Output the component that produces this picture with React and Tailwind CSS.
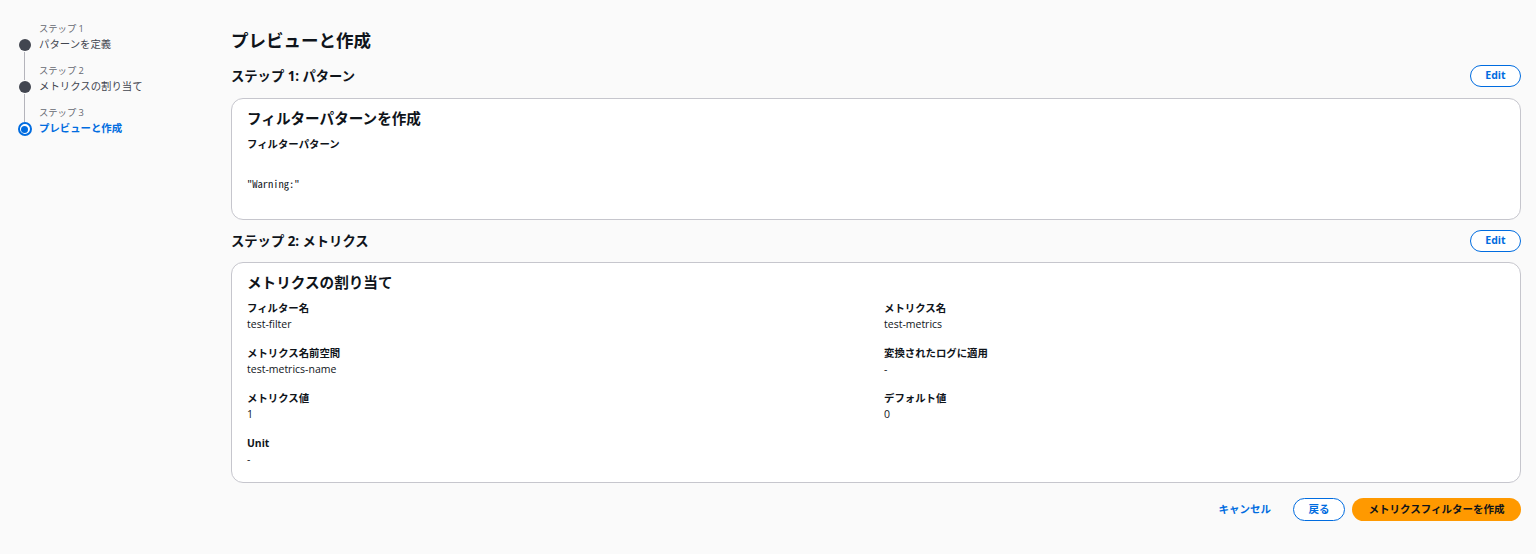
import React from 'react';

const font = { fontFamily: '"Open Sans", "Noto Sans CJK JP", sans-serif' };

const steps = [
  { label: 'ステップ 1', title: 'パターンを定義', state: 'done' },
  { label: 'ステップ 2', title: 'メトリクスの割り当て', state: 'done' },
  { label: 'ステップ 3', title: 'プレビューと作成', state: 'active' },
];

const StepNav = () => (
  <nav className="w-[231px] shrink-0 pl-[18px] pt-[22px]">
    {steps.map((s, i) => (
      <div key={s.label} className="flex">
        <div className="flex w-[13px] shrink-0 flex-col items-center">
          <div className={i > 0 ? 'h-[16px] w-px bg-[#b4b4bb]' : 'h-[16px]'} />
          {s.state === 'active' ? (
            <div className="flex h-[14px] w-[14px] items-center justify-center rounded-full border-2 border-[#006ce0] bg-white">
              <div className="h-[7px] w-[7px] rounded-full bg-[#006ce0]" />
            </div>
          ) : (
            <div className="my-[1px] h-[12px] w-[12px] rounded-full bg-[#424650]" />
          )}
          {i < steps.length - 1 && <div className="w-px flex-1 bg-[#b4b4bb]" />}
        </div>
        <div className={i < steps.length - 1 ? 'ml-[8px] pb-[12px]' : 'ml-[8px]'}>
          <div className="text-[9.3px] leading-[14px] text-[#656871]">{s.label}</div>
          <div
            className={
              s.state === 'active'
                ? 'text-[10.4px] font-bold leading-[16px] text-[#006ce0]'
                : 'text-[10.4px] leading-[16px] text-[#424650]'
            }
          >
            {s.title}
          </div>
        </div>
      </div>
    ))}
  </nav>
);

const EditButton = () => (
  <button className="h-[22px] w-[51px] rounded-full border border-[#006ce0] bg-white text-[10.5px] font-bold text-[#006ce0]">
    Edit
  </button>
);

const SectionHeader = ({ title }) => (
  <div className="flex items-center justify-between">
    <h2 className="text-[13.3px] font-bold leading-[20px] text-[#0f141a]">{title}</h2>
    <EditButton />
  </div>
);

const Field = ({ label, value }) => (
  <div className="h-[45px]">
    <div className="text-[10.4px] font-bold leading-[16px] text-[#0f141a]">{label}</div>
    <div className="text-[10.5px] leading-[16px] text-[#0f141a]">{value}</div>
  </div>
);

export default function App() {
  return (
    <div className="flex min-h-[554px] bg-[#fafafa]" style={font}>
      <StepNav />
      <main className="flex-1 pr-[15px] pt-[27px]">
        <h1 className="text-[17.5px] font-bold leading-[26px] text-[#0f141a]">プレビューと作成</h1>

        <div className="mt-[12px]">
          <SectionHeader title="ステップ 1: パターン" />
        </div>
        <section className="mt-[11px] h-[122px] rounded-[12px] border border-[#c6c6cd] bg-white px-[15px] pt-[8px]">
          <h3 className="text-[14.6px] font-bold leading-[22px] text-[#0f141a]">フィルターパターンを作成</h3>
          <div className="mt-[7px] text-[10.4px] font-bold leading-[16px] text-[#0f141a]">フィルターパターン</div>
          <pre
            className="mt-[25px] text-[10.5px] leading-[14px] text-[#0f141a]"
            style={{ fontFamily: '"Noto Sans Mono CJK JP", "DejaVu Sans Mono", monospace' }}
          >
            "Warning:"
          </pre>
        </section>

        <div className="mt-[10px]">
          <SectionHeader title="ステップ 2: メトリクス" />
        </div>
        <section className="mt-[10px] h-[221px] rounded-[12px] border border-[#c6c6cd] bg-white px-[15px] pt-[8px]">
          <h3 className="text-[14.6px] font-bold leading-[22px] text-[#0f141a]">メトリクスの割り当て</h3>
          <div className="mt-[7px] grid grid-cols-2 gap-x-[16px]">
            <div>
              <Field label="フィルター名" value="test-filter" />
              <Field label="メトリクス名前空間" value="test-metrics-name" />
              <Field label="メトリクス値" value="1" />
              <Field label="Unit" value="-" />
            </div>
            <div>
              <Field label="メトリクス名" value="test-metrics" />
              <Field label="変換されたログに適用" value="-" />
              <Field label="デフォルト値" value="0" />
            </div>
          </div>
        </section>

        <div className="mt-[15px] flex items-center justify-end">
          <button className="mr-[22px] text-[10.5px] font-bold text-[#006ce0]">キャンセル</button>
          <button className="mr-[7px] h-[23px] w-[52px] rounded-full border border-[#006ce0] bg-white text-[10.5px] font-bold text-[#006ce0]">
            戻る
          </button>
          <button className="h-[23px] w-[169px] rounded-full bg-[#ff9900] text-[10.5px] font-bold text-[#0f141a]">
            メトリクスフィルターを作成
          </button>
        </div>
      </main>
    </div>
  );
}
